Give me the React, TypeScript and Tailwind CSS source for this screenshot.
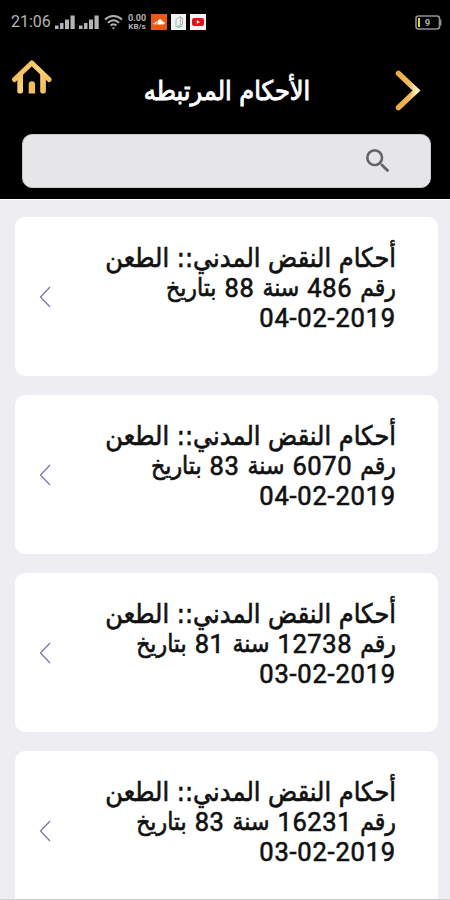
import React from 'react';

interface Ruling {
  id: number;
  title: string;
  caseNumber: string;
  year: string;
  date: string;
}

const rulings: Ruling[] = [
  { id: 1, title: 'أحكام النقض المدني:: الطعن', caseNumber: '486', year: '88', date: '04-02-2019' },
  { id: 2, title: 'أحكام النقض المدني:: الطعن', caseNumber: '6070', year: '83', date: '04-02-2019' },
  { id: 3, title: 'أحكام النقض المدني:: الطعن', caseNumber: '12738', year: '81', date: '03-02-2019' },
  { id: 4, title: 'أحكام النقض المدني:: الطعن', caseNumber: '16231', year: '83', date: '03-02-2019' },
];

const SignalIcon = () => (
  <svg className="w-5 h-[15px]" viewBox="0 0 20 15" fill="#b4b4b4">
    <rect x="0" y="10.5" width="3.5" height="3.5" />
    <rect x="5" y="8" width="3.5" height="6" />
    <rect x="10" y="4.5" width="4" height="9.5" />
    <rect x="15.5" y="0.5" width="4.2" height="13.5" />
  </svg>
);

const StatusBar = () => (
  <div className="h-11 shrink-0 flex items-center pl-[11px] pr-2 text-[#b4b4b4]">
    <span className="w-11 text-[16px] leading-none font-['Roboto']">21:06</span>
    <SignalIcon />
    <div className="ml-1">
      <SignalIcon />
    </div>
    <svg className="ml-[5px] w-[19px] h-4" viewBox="0 0 19 16" fill="none" stroke="#b4b4b4" strokeWidth="2">
      <path d="M1 5.5C6 .8 13 .8 18 5.5" />
      <path d="M4 8.8c3.4-3.2 7.6-3.2 11 0" />
      <path d="M6.6 11.6c1.8-1.6 4-1.6 5.8 0" />
      <path d="M9.5 15.5l-1.7-2h3.4z" fill="#b4b4b4" stroke="none" />
    </svg>
    <div className="ml-[4px] w-[20px] flex flex-col items-center font-['Roboto'] font-bold">
      <div className="text-[9px] leading-[9px]">0.00</div>
      <div className="text-[8px] leading-[8px]">KB/s</div>
    </div>
    <div className="ml-[4px] w-4 h-4 bg-[#ea5a13] flex items-center justify-center">
      <svg className="w-3 h-2" viewBox="0 0 12 8" fill="#fff">
        <path d="M5 6.5V2.2C6.8.5 9 1.4 9.2 3.6c3-.6 3.3 2.9 1 2.9zM3.5 3h1v3.5h-1zM1.9 4h1v2.5h-1zM.4 5h1v1.3h-1z" />
      </svg>
    </div>
    <div className="ml-1 w-[15px] h-4 bg-[#f1f1f1] flex items-center justify-center">
      <svg className="w-3 h-3.5" viewBox="0 0 12 14" fill="none" stroke="#9aa9a5" strokeWidth="0.8">
        <path d="M3 4.5L7.5 1.5v8.5L3 12zM8 3h1.5v6.5H8" />
        <path d="M4.5 12.8l4.5-1.8" stroke="#58c2ac" strokeWidth="1.2" />
      </svg>
    </div>
    <div className="ml-1 w-4 h-4 bg-[#f5f5f5] flex items-center justify-center">
      <svg className="w-3 h-2" viewBox="0 0 12 8">
        <rect width="12" height="8" rx="2" fill="#e3101b" />
        <path d="M4.8 2.2v3.6L8 4z" fill="#fff" />
      </svg>
    </div>
    <svg className="ml-auto w-[27px] h-[15px]" viewBox="0 0 27 15">
      <rect x="1" y="1" width="23.5" height="13" rx="2.5" fill="none" stroke="#929292" strokeWidth="1.6" />
      <path d="M25.5 4.5v6" stroke="#929292" strokeWidth="1.8" />
      <rect x="3" y="3" width="2" height="9" fill="#e0d63a" />
      <text x="12.5" y="11" fontSize="9.5" fontWeight="700" fontFamily="Roboto" fill="#b4b4b4" textAnchor="middle">9</text>
    </svg>
  </div>
);

const Header = () => (
  <header className="h-[90px] shrink-0 flex items-start justify-between pl-[11px] pr-[29px]">
    <svg className="mt-[15px] w-[42px] h-[37px]" viewBox="0 0 42 37" fill="none">
      <defs>
        <linearGradient id="gold" x1="0" y1="0" x2="42" y2="37" gradientUnits="userSpaceOnUse">
          <stop offset="0" stopColor="#f0a93f" />
          <stop offset="0.5" stopColor="#fbd27c" />
          <stop offset="1" stopColor="#eeb04e" />
        </linearGradient>
      </defs>
      <path d="M3.5 20.5L20.8 4l17.3 16.5" stroke="url(#gold)" strokeWidth="5" strokeLinecap="round" strokeLinejoin="round" />
      <path d="M6.3 20l5.7-6v18.5q0 2-2 2H8.3q-2 0-2-2zM34.9 20l-5.7-6v18.5q0 2 2 2h1.7q2 0 2-2z" fill="url(#gold)" />
      <path d="M17.7 34.5V25.5a3.2 3.2 0 0 1 6.4 0v9z" fill="#f2bd61" />
    </svg>
    <h1 dir="rtl" className="mt-[27px] ml-[6px] h-[40px] leading-[40px] font-['DejaVu_Sans_Condensed','DejaVu_Sans',sans-serif] font-stretch-condensed text-[26.8px] text-white whitespace-nowrap [-webkit-text-stroke:0.9px_white]">
      الأحكام المرتبطه
    </h1>
    <svg className="mt-[26px] w-[26px] h-[42px]" viewBox="0 0 26 42" fill="none">
      <defs>
        <linearGradient id="goldArrow" x1="0" y1="0" x2="1" y2="0">
          <stop offset="0" stopColor="#efa942" />
          <stop offset="0.65" stopColor="#f3bd60" />
          <stop offset="1" stopColor="#fff0bd" />
        </linearGradient>
      </defs>
      <path d="M3.5 3.5L21.5 20.5 3.5 37.5" stroke="url(#goldArrow)" strokeWidth="5.5" strokeLinecap="round" />
    </svg>
  </header>
);

const SearchBar = () => (
  <div className="h-[65px] shrink-0 pl-[22px] pr-[19px]">
    <div className="h-[54px] rounded-[10px] bg-[#e6e6e8] border border-[#c9c9cb] flex items-center justify-end pr-[36px]">
      <svg className="w-8 h-8" viewBox="0 0 24 24" fill="#646466">
        <path d="M15.5 14h-.79l-.28-.27A6.471 6.471 0 0 0 16 9.5 6.5 6.5 0 1 0 9.5 16c1.61 0 3.09-.59 4.23-1.57l.27.28v.79l5 4.99L20.49 19l-4.99-5zm-6 0C7.01 14 5 11.99 5 9.5S7.01 5 9.5 5 14 7.01 14 9.5 11.99 14 9.5 14z" />
      </svg>
    </div>
  </div>
);

const RulingCard: React.FC<{ ruling: Ruling }> = ({ ruling }) => (
  <button className="w-full h-[159px] shrink-0 rounded-[10px] bg-white flex items-center justify-between pl-[24px] pr-[42px]">
    <svg className="w-3 h-[22px]" viewBox="0 0 12 22" fill="none" stroke="#7878b4" strokeWidth="1.3">
      <path d="M11 1L1.5 11 11 21" />
    </svg>
    <div dir="rtl" className="mb-[16px] text-[#111] font-['DejaVu_Sans_Condensed','DejaVu_Sans',sans-serif] font-stretch-condensed whitespace-nowrap [-webkit-text-stroke:0.6px_#111]">
      <div className="h-[30px] flex items-center text-[26.8px]">{ruling.title}</div>
      <div className="h-[30px] flex items-center gap-2 text-[24.5px]">
        <span>رقم</span>
        <span className="font-['Roboto'] font-stretch-normal text-[25.5px] tracking-[0.6px]">{ruling.caseNumber}</span>
        <span>سنة</span>
        <span className="font-['Roboto'] font-stretch-normal text-[25.5px] tracking-[0.6px]">{ruling.year}</span>
        <span>بتاريخ</span>
      </div>
      <div className="h-[30px] flex items-center">
        <span dir="ltr" className="font-['Roboto'] font-stretch-normal text-[25.5px] tracking-[0.8px]">{ruling.date}</span>
      </div>
    </div>
  </button>
);

const App: React.FC = () => {
  return (
    <div className="w-full h-screen overflow-hidden flex flex-col bg-[#eeeef2]">
      <div className="shrink-0 bg-black flex flex-col">
        <StatusBar />
        <Header />
        <SearchBar />
      </div>
      <main className="flex-1 min-h-0 overflow-hidden border-t border-white pt-[17px] pl-[15px] pr-3 flex flex-col gap-[19px]">
        {rulings.map(ruling => (
          <RulingCard key={ruling.id} ruling={ruling} />
        ))}
      </main>
      <div className="h-px shrink-0 bg-[#cfcfd3]" />
    </div>
  );
};

export default App;
